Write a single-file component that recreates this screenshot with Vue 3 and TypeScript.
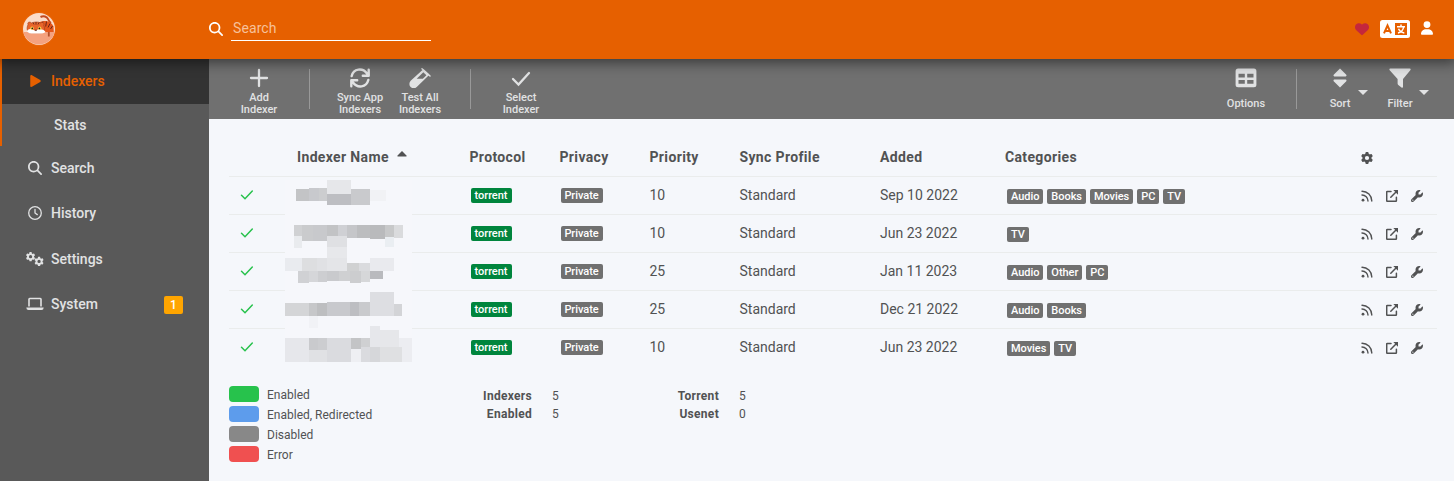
<script setup lang="ts">
type Cell = [number, number, number, number, string]

interface Indexer {
  priority: number
  added: string
  categories: string[]
}

const indexers: Indexer[] = [
  { priority: 10, added: 'Sep 10 2022', categories: ['Audio', 'Books', 'Movies', 'PC', 'TV'] },
  { priority: 10, added: 'Jun 23 2022', categories: ['TV'] },
  { priority: 25, added: 'Jan 11 2023', categories: ['Audio', 'Other', 'PC'] },
  { priority: 25, added: 'Dec 21 2022', categories: ['Audio', 'Books'] },
  { priority: 10, added: 'Jun 23 2022', categories: ['Movies', 'TV'] },
]

const legend = [
  { label: 'Enabled', kind: 'green' },
  { label: 'Enabled, Redirected', kind: 'blue' },
  { label: 'Disabled', kind: 'gray' },
  { label: 'Error', kind: 'red' },
]

// Mosaic that hides the indexer names: x, y, width, height, fill
const mosaic: Cell[] = [
  [296, 189, 13, 12, '#c3c4c6'], [309, 188, 10, 13, '#c8c9cd'], [319, 188, 8, 13, '#cccdcf'], [327, 180, 24, 14, '#e6e7ea'],
  [327, 194, 24, 11, '#bdbec2'], [351, 189, 19, 16, '#c9cacd'], [370, 190, 16, 11, '#f1f2f5'],
  [294, 225, 8, 11, '#d0d1d3'], [302, 225, 11, 16, '#cacbcd'], [313, 225, 14, 16, '#c8c9cc'], [327, 225, 11, 13, '#c2c3c5'],
  [338, 225, 9, 11, '#cfd0d4'], [347, 225, 10, 13, '#c5c6c9'], [357, 225, 13, 13, '#bcbdbf'], [370, 225, 15, 14, '#b9babc'],
  [385, 225, 9, 12, '#c7c8c9'], [394, 225, 9, 13, '#dadbdd'], [294, 236, 8, 12, '#e9ebee'], [327, 236, 20, 11, '#dfe0e3'],
  [385, 237, 9, 10, '#eaeef2'],
  [327, 247, 20, 20, '#e7e8eb'], [285, 258, 17, 13, '#e9ebef'], [302, 258, 15, 13, '#dddee0'], [317, 258, 10, 13, '#e0e1e4'],
  [327, 258, 20, 13, '#e4e5e8'], [347, 263, 12, 8, '#d0d1d2'], [359, 263, 11, 8, '#dadbde'], [370, 258, 24, 13, '#e9eaee'],
  [298, 271, 11, 12, '#d0d1d4'], [309, 271, 9, 11, '#d5d6d9'], [318, 271, 9, 11, '#cdced1'], [327, 271, 12, 10, '#c9cacd'],
  [339, 271, 11, 10, '#cfd0d2'], [350, 271, 11, 12, '#cccdcf'], [361, 271, 9, 11, '#d6d7d9'], [370, 271, 13, 8, '#b9babe'],
  [370, 292, 24, 24, '#dddee2'], [285, 303, 24, 13, '#d4d5d7'], [309, 303, 8, 13, '#c6c7c9'], [317, 303, 10, 13, '#bdbec0'],
  [327, 302, 23, 14, '#c8c9cd'], [350, 302, 9, 14, '#bdbec2'], [359, 302, 11, 14, '#c9cacd'], [394, 304, 8, 12, '#d3d4d7'],
  [309, 316, 9, 12, '#f1f2f6'],
  [370, 326, 10, 21, '#e6e7eb'], [380, 330, 19, 17, '#e6e7ea'], [399, 338, 13, 9, '#ecedf1'], [285, 338, 24, 24, '#e6e7eb'],
  [309, 338, 9, 12, '#c9cacd'], [318, 338, 9, 12, '#cccdd0'], [327, 338, 24, 24, '#dadbdf'], [351, 338, 10, 11, '#c3c4c6'],
  [361, 338, 9, 9, '#cfd0d2'], [309, 350, 18, 12, '#e0e1e4'], [351, 349, 10, 13, '#eeeff3'], [361, 347, 9, 15, '#dadbdf'],
  [370, 347, 10, 15, '#d6d7da'], [380, 347, 22, 15, '#dfe0e2'], [402, 347, 10, 15, '#ecedf1'],
]

const searchPath = 'M416 208c0 45.9-14.9 88.3-40 122.7L502.6 457.4c12.5 12.5 12.5 32.8 0 45.3s-32.8 12.5-45.3 0L330.7 376c-34.4 25.2-76.8 40-122.7 40C93.1 416 0 322.9 0 208S93.1 0 208 0S416 93.1 416 208zM208 352a144 144 0 1 0 0-288 144 144 0 1 0 0 288z'
const gearPath = 'M495.9 166.6c3.2 8.7 .5 18.4-6.4 24.6l-43.3 39.4c1.1 8.3 1.7 16.8 1.7 25.4s-.6 17.1-1.7 25.4l43.3 39.4c6.9 6.2 9.6 15.9 6.4 24.6c-4.4 11.9-9.7 23.3-15.8 34.3l-4.7 8.1c-6.6 11-14 21.4-22.1 31.2c-5.9 7.2-15.7 9.6-24.5 6.8l-55.7-17.7c-13.4 10.3-28.2 18.9-44 25.4l-12.5 57.1c-2 9.1-9 16.3-18.2 17.8c-13.8 2.3-28 3.5-42.5 3.5s-28.7-1.2-42.5-3.5c-9.2-1.5-16.2-8.7-18.2-17.8l-12.5-57.1c-15.8-6.5-30.6-15.1-44-25.4L83.1 425.9c-8.8 2.8-18.6 .3-24.5-6.8c-8.1-9.8-15.5-20.2-22.1-31.2l-4.7-8.1c-6.1-11-11.4-22.4-15.8-34.3c-3.2-8.7-.5-18.4 6.4-24.6l43.3-39.4C64.6 273.1 64 264.6 64 256s.6-17.1 1.7-25.4L22.4 191.2c-6.9-6.2-9.6-15.9-6.4-24.6c4.4-11.9 9.7-23.3 15.8-34.3l4.7-8.1c6.6-11 14-21.4 22.1-31.2c5.9-7.2 15.7-9.6 24.5-6.8l55.7 17.7c13.4-10.3 28.2-18.9 44-25.4l12.5-57.1c2-9.1 9-16.3 18.2-17.8C227.3 1.2 241.5 0 256 0s28.7 1.2 42.5 3.5c9.2 1.5 16.2 8.7 18.2 17.8l12.5 57.1c15.8 6.5 30.6 15.1 44 25.4l55.7-17.7c8.8-2.8 18.6-.3 24.5 6.8c8.1 9.8 15.5 20.2 22.1 31.2l4.7 8.1c6.1 11 11.4 22.4 15.8 34.3zM256 346a90 90 0 1 0 0-180 90 90 0 1 0 0 180z'
const wrenchPath = 'M352 320c88.4 0 160-71.6 160-160c0-15.3-2.2-30.1-6.2-44.2c-3.1-10.8-16.4-13.2-24.3-5.3l-76.8 76.8c-3 3-7.1 4.7-11.3 4.7H336c-8.8 0-16-7.2-16-16V118.6c0-4.2 1.7-8.3 4.7-11.3l76.8-76.8c7.9-7.9 5.4-21.2-5.3-24.3C382.1 2.2 367.3 0 352 0C263.6 0 192 71.6 192 160c0 19.1 3.4 37.5 9.5 54.5L19.9 396.1C7.2 408.8 0 426.1 0 444.1C0 481.6 30.4 512 67.9 512c18 0 35.3-7.2 48-19.9L297.5 310.5c17 6.2 35.4 9.5 54.5 9.5zM80 408a24 24 0 1 1 0 48 24 24 0 1 1 0-48z'
</script>

<template>
  <div class="page">
    <header class="header">
      <svg class="logo" viewBox="0 0 34 34">
        <circle cx="17" cy="17" r="16.6" fill="none" stroke="#ef6a12" stroke-width=".6" />
        <circle cx="17" cy="17" r="16" fill="#fbdcc9" />
        <path d="M1.400 20H32.600A16 16 0 0 1 1.400 20Z" fill="#f4a27f" />
        <path d="M18.500 5c3-1.500 6.500-.5 7.500 2 .8 2 1.500 3 3 4" fill="none" stroke="#c24a20" stroke-width="2" />
        <path d="M16 11c5-3.500 13-2.500 15.500 3.500l.3 5.500H15z" fill="#e4571c" />
        <path d="M21 9.500l-1.500 4M24.500 9.500l-.8 5M28 11.500l-2 4M30.500 14l-2 3" stroke="#6b2415" stroke-width="1" />
        <path d="M6 12.800c-1-2.600 1.600-3.600 3.600-1.800 3-1.400 6.800-1.400 9 0 2-1.600 4.200.2 3 2.500 2 3.500.4 6.700-2 7.200H8c-3-.7-3.700-4.700-2-7.900z" fill="#e8652b" stroke="#9a3c1c" stroke-width=".6" />
        <path d="M5 19.500c.4-2.800 4-3.500 8-.8 5-2.800 9.500-1.400 10.500 1.300-2 2-6.500 1.600-9 1.400-3 .4-7.800.5-9.500-1.900z" fill="#fff" />
        <path d="M11 10.500l1 2M14 10v2.700M17 10.500l-1 2" stroke="#5b2014" stroke-width=".8" />
        <circle cx="10" cy="16.300" r="1.700" fill="#ffd34d" /><circle cx="17.700" cy="16.300" r="1.700" fill="#ffd34d" />
        <circle cx="10.300" cy="16.300" r=".9" fill="#241815" /><circle cx="17.400" cy="16.300" r=".9" fill="#241815" />
        <path d="M12.600 17.800h2.700l-1.300 1.500z" fill="#53241d" />
        <path d="M26.800 20v4.500" stroke="#b5502c" stroke-width="1.800" />
      </svg>
      <div class="search">
        <svg class="search-icon" viewBox="0 0 512 512"><path :d="searchPath" fill="#fff" /></svg>
        <div class="search-input">Search</div>
      </div>
      <div class="header-actions">
        <svg class="heart" viewBox="0 0 512 512"><path fill="#c4273c" d="M47.600 300.400L228.300 469.100c7.500 7 17.400 10.900 27.700 10.900s20.200-3.900 27.700-10.900L464.400 300.400c30.400-28.300 47.600-68 47.600-109.500v-5.800c0-69.900-50.500-129.500-119.400-141C347 36.500 300.600 51.400 268 84L256 96 244 84c-32.600-32.600-79-47.500-124.600-39.900C50.500 55.600 0 115.200 0 185.100v5.800c0 41.500 17.200 81.200 47.600 109.500z" /></svg>
        <svg class="language" viewBox="0 0 30 18">
          <rect width="30" height="18" rx="2.500" fill="#fff" />
          <rect x="15" y="3" width="12" height="12" fill="#e66000" />
          <path d="M4 13.300L7.500 5.500 11 13.300M5.300 11h4.400" fill="none" stroke="#e66000" stroke-width="2" />
          <path d="M17 6.800h8M21 4.500v2M18 13c3.400-.9 5.200-3 5.600-6M18.500 8.800c1 2.200 3 3.800 5.800 4.200" fill="none" stroke="#fff" stroke-width="1.500" />
        </svg>
        <svg class="user" viewBox="0 0 448 512"><path fill="#fff" d="M224 256A128 128 0 1 0 224 0a128 128 0 1 0 0 256zm-45.700 48C79.800 304 0 383.800 0 482.300C0 498.700 13.300 512 29.700 512H418.300c16.400 0 29.700-13.300 29.700-29.700C448 383.800 368.200 304 269.700 304H178.300z" /></svg>
      </div>
    </header>

    <div class="body">
      <nav class="sidebar">
        <div class="nav-group">
          <div class="nav-item active">
            <svg class="nav-icon play" viewBox="0 0 448 512"><path d="M424.400 214.700L72.400 6.600C43.800-10.300 0 6.100 0 47.900V464c0 37.500 40.700 60.100 72.400 41.300l352-208c31.400-18.500 31.500-64.100 0-82.600z" /></svg>
            <span>Indexers</span>
          </div>
          <div class="nav-child">Stats</div>
        </div>
        <div class="nav-item">
          <svg class="nav-icon" viewBox="0 0 512 512"><path :d="searchPath" /></svg>
          <span>Search</span>
        </div>
        <div class="nav-item">
          <svg class="nav-icon" viewBox="0 0 14 14"><g fill="none" stroke="#e1e2e3" stroke-width="1.300" stroke-linecap="round"><circle cx="7" cy="7" r="6.300" /><path d="M7 3.500V7l2.300 1.600" /></g></svg>
          <span>History</span>
        </div>
        <div class="nav-item">
          <svg class="nav-icon cogs" viewBox="0 0 18 14">
            <path fill-rule="evenodd" transform="translate(-.1 0) scale(.0182)" :d="gearPath" />
            <path fill-rule="evenodd" transform="translate(8.400 4.800) scale(.0182)" :d="gearPath" />
          </svg>
          <span>Settings</span>
        </div>
        <div class="nav-item">
          <svg class="nav-icon laptop" viewBox="0 0 18 14"><path d="M3 9.500V2.200q0-.7.700-.7h10.600q.7 0 .7.700v7.300" fill="none" stroke="#e1e2e3" stroke-width="1.600" /><path d="M.3 10.500h17.400q-.1 2.500-2.200 2.500H2.500Q.4 13 .3 10.500z" /></svg>
          <span>System</span>
          <span class="badge">1</span>
        </div>
      </nav>

      <main class="content">
        <div class="toolbar">
          <div class="tool add">
            <svg viewBox="0 0 22 20"><path d="M11 2v16M3 10h16" fill="none" stroke-width="2.300" stroke-linecap="round" /></svg>
            <span>Add<br>Indexer</span>
          </div>
          <i class="separator"></i>
          <div class="tool sync">
            <svg viewBox="0 0 22 20"><path d="M2.700 8C4.500.6 13.500-.6 18 5.500M19.700 1.800v5.900h-5.900M19.300 12c-1.800 7.400-10.800 8.600-15.300 2.500M2.300 18.200v-5.900h5.900" fill="none" stroke-width="2.400" stroke-linecap="round" stroke-linejoin="round" /></svg>
            <span>Sync App<br>Indexers</span>
          </div>
          <div class="tool test">
            <svg viewBox="0 0 22 20"><path d="M13 .8l8 7.200M14.500 2L2.200 13.400a3.500 3.500 0 0 0 5 5.100L19.500 6.500z" stroke-width="1.500" stroke-linecap="round" /><path class="cut" d="M14.300 4.300l3.100 3-3.600 3.400H7.700z" /></svg>
            <span>Test All<br>Indexers</span>
          </div>
          <i class="separator"></i>
          <div class="tool select">
            <svg viewBox="0 0 22 20"><path d="M3 11l5.500 5.500L19 5" fill="none" stroke-width="2.300" stroke-linecap="round" /></svg>
            <span>Select<br>Indexer</span>
          </div>
          <div class="tools-right">
            <div class="tool options">
              <svg viewBox="0 0 22 20"><rect x=".6" y=".6" width="20.800" height="18.600" rx="2.500" /><path class="cut" d="M3.500 5.700h6.300v3.700H3.500zM12.200 5.700h6.300v3.700h-6.300zM3.500 12h6.300v3.800H3.500zM12.200 12h6.300v3.800h-6.300z" /></svg>
              <span>Options</span>
            </div>
            <i class="separator"></i>
            <div class="tool sort">
              <svg viewBox="0 0 22 20"><path d="M11 .6l6.300 6.200q.8 1.400-.6 1.600H5.300q-1.400-.2-.6-1.600zM11 19.400l6.300-6.200q.8-1.400-.6-1.600H5.300q-1.400.2-.6 1.600z" /></svg>
              <span>Sort</span>
            </div>
            <i class="caret"></i>
            <div class="tool filter">
              <svg viewBox="0 0 22 20"><path d="M1.300.6h19.400q1.600.2.600 1.600L14 11v8q-.3 1.100-1.500.4l-3.200-2.300q-.7-.6-.7-1.500V11L.7 2.200Q-.2.800 1.300.6z" /></svg>
              <span>Filter</span>
            </div>
            <i class="caret"></i>
          </div>
        </div>

        <section class="table">
          <div class="row head">
            <span></span>
            <span class="name-head">Indexer Name <svg viewBox="0 0 10 6"><path d="M5 0l4.700 4.700q.2.800-.6.800H.9q-.8 0-.6-.8z" fill="#515253" /></svg></span>
            <span>Protocol</span><span>Privacy</span><span>Priority</span><span>Sync Profile</span><span>Added</span><span>Categories</span>
            <span class="actions"><svg viewBox="0 0 512 512"><path fill-rule="evenodd" :d="gearPath" /></svg></span>
          </div>
          <div v-for="(item, i) in indexers" :key="i" class="row">
            <span class="status"><svg viewBox="0 0 14 12"><path d="M1.500 6.300l3.500 3.400L12.300 2" fill="none" stroke="#27c24c" stroke-width="1.500" stroke-linecap="round" /></svg></span>
            <span></span>
            <span class="cell-label"><b class="label torrent">torrent</b></span>
            <span class="cell-label"><b class="label private">Private</b></span>
            <span>{{ item.priority }}</span>
            <span>Standard</span>
            <span>{{ item.added }}</span>
            <span class="cell-label categories"><b v-for="c in item.categories" :key="c" class="label">{{ c }}</b></span>
            <span class="actions">
              <svg viewBox="0 0 12 12"><circle cx="2" cy="10.200" r="1.400" /><path d="M1 5a6 6 0 0 1 6 6M1 1.200A9.800 9.800 0 0 1 10.800 11" fill="none" stroke="#515253" stroke-width="1.400" stroke-linecap="round" /></svg>
              <svg viewBox="0 0 12 12"><path d="M5 1.500H1.200q-.5 0-.5.500v8.700q0 .5.500.5h8.700q.5 0 .5-.5V7.200M4.800 7.200l5.200-5.200" fill="none" stroke="#515253" stroke-width="1.500" stroke-linecap="round" /><path d="M7.300 0H12v4.700z" /></svg>
              <svg viewBox="0 0 512 512"><path fill-rule="evenodd" :d="wrenchPath" /></svg>
            </span>
          </div>
          <svg class="mosaic" viewBox="285 180 127 182" shape-rendering="crispEdges">
            <rect x="285" y="180" width="127" height="182" fill="#f6f7fb" />
            <rect v-for="(m, i) in mosaic" :key="i" :x="m[0]" :y="m[1]" :width="m[2]" :height="m[3]" :fill="m[4]" />
          </svg>
        </section>

        <footer class="footer">
          <div class="legend">
            <div v-for="l in legend" :key="l.label" class="legend-item"><i :class="l.kind"></i><span>{{ l.label }}</span></div>
          </div>
          <dl class="stats"><dt>Indexers</dt><dd>5</dd><dt>Enabled</dt><dd>5</dd></dl>
          <dl class="stats"><dt>Torrent</dt><dd>5</dd><dt>Usenet</dt><dd>0</dd></dl>
        </footer>
      </main>
    </div>
  </div>
</template>

<style>
body { margin: 0; overflow: hidden; }
</style>

<style scoped>
* { box-sizing: border-box; }
.page { display: flex; flex-direction: column; width: 1454px; height: 481px; overflow: hidden; background: #f5f7fb; color: #515253; font: 14px/20px Roboto, sans-serif; }
svg { display: block; flex: none; }
.header { position: relative; z-index: 2; display: flex; align-items: center; flex: none; height: 59px; padding-left: 22px; background: #e66000; box-shadow: 0 2px 12px 2px rgba(0, 0, 0, .48); }
.logo { width: 34px; height: 34px; margin-bottom: 1px; }
.search { display: flex; align-items: center; margin-left: 153px; }
.search-icon { width: 14px; height: 14px; margin-bottom: 2px; }
.search-input { width: 200px; height: 25px; margin-left: 8px; padding: 0 2px; border-bottom: 1px solid #fff; color: #f7c09a; line-height: 25px; margin-bottom: 2px; letter-spacing: .1px; }
.header-actions { display: flex; align-items: center; margin-left: auto; margin-right: 21px; }
.heart { width: 14px; height: 14px; margin-bottom: 2px; }
.language { width: 30px; height: 18px; margin: 0 11px 2px; }
.user { width: 12px; height: 14px; margin-bottom: 3px; }

.body { display: flex; flex: 1; min-height: 0; }
.sidebar { width: 209px; flex: none; background: #595959; color: #e1e2e3; font-weight: 500; }
.nav-group { height: 87px; border-left: 2px solid #e66000; }
.nav-item { display: flex; align-items: center; height: 45.300px; padding: 0 0 1.200px 26px; }
.nav-item span { line-height: 20px; }
.nav-group .nav-item { height: 45px; padding: 0 0 2px 24px; }
.active { background: #333; color: #e66000; }
.nav-icon { width: 14px; height: 14px; margin: 0 9px 0 2px; fill: currentColor; }
.play { width: 11px; height: 12px; margin: 0 10px 0 4px; }
.cogs, .laptop { width: 18px; height: 14px; margin: 0 7px 0 0; }
.nav-child { padding-left: 52px; line-height: 42px; }
.badge { width: 19px; height: 18px; margin: 2px 26px 0 auto; border-radius: 2px; background: #ffa500; color: #fff; font-size: 12px; text-align: center; }
.nav-item .badge { line-height: 19px; }

.content { flex: 1; min-width: 0; }
.toolbar { display: flex; height: 60px; padding-left: 20px; background: #707070; color: #e1e2e3; font-size: 11px; line-height: 12px; font-weight: 500; }
.tool { display: flex; flex-direction: column; align-items: center; width: 60px; padding-top: 9px; text-align: center; }
.tool svg { width: 22px; height: 20px; margin-bottom: 4px; fill: #e1e2e3; stroke: #e1e2e3; stroke-width: 0; }
.tool .cut { fill: #707070; }
.separator { width: 1px; height: 40px; margin: 10px 20px 0; background: #999; }
.tools-right { display: flex; margin-left: auto; padding-right: 25px; }
.tools-right .tool svg { margin-bottom: 10px; }
.sort { margin-left: -7px; }
.filter { margin-left: 2px; }
.caret { width: 0; height: 0; margin-top: 31px; margin-left: -12px; border: 5px solid transparent; border-top-color: #e1e2e3; border-bottom: 0; }
.caret:last-child { margin-left: -11px; }

.table { position: relative; padding: 20px 17px 0 20px; }
.row { display: grid; grid-template-columns: 68px 172.500px 90px 90px 90px 140.500px 125px 356px 76px; align-items: center; height: 38px; border-top: 1px solid #eaecec; }
.row > span { padding-bottom: 2px; line-height: 20px; }
.head { height: 37px; border-top: 0; font-weight: 700; letter-spacing: .35px; }
.name-head { display: flex; }
.name-head svg { width: 10px; height: 6px; margin: 4px 0 0 8px; }
.status svg { width: 14px; height: 12px; margin-left: 11px; }
.row > .cell-label { display: flex; padding-bottom: 0; }
.label { height: 15px; margin-left: 1px; padding: 0 4px; border-radius: 2px; background: #707070; color: #fff; font-size: 11px; line-height: 16px; font-weight: 500; letter-spacing: -.05px; }
.torrent { width: 41px; background: #00853d; text-align: center; padding: 0; }
.private { width: 42px; text-align: center; padding: 0; }
.row > .categories { gap: 3px; padding: 2px 0 0 1px; }
.row > .actions { display: flex; gap: 13px; align-items: center; padding: 0; }
.actions svg { width: 12px; height: 12px; fill: #515253; }
.mosaic { position: absolute; left: 76px; top: 61px; width: 127px; height: 182px; }

.footer { display: flex; padding: 20px 0 0 20px; font-size: 12px; }
.legend { width: 233px; }
.legend-item { display: flex; height: 20px; }
.legend-item i { width: 30px; height: 16px; margin-right: 8px; border-radius: 4px; }
.legend-item span { line-height: 18px; }
.green { background: #27c24c; }
.blue { background: #5d9cec; }
.gray { background: #888; }
.red { background: #f05050; }
.stats { display: grid; grid-template-columns: 70px 97px; column-gap: 20px; grid-auto-rows: 18px; margin: 1px 0 0; line-height: 18px; }
.stats dt { text-align: right; font-weight: 700; letter-spacing: .3px; }
.stats dd { margin: 0; }
</style>
